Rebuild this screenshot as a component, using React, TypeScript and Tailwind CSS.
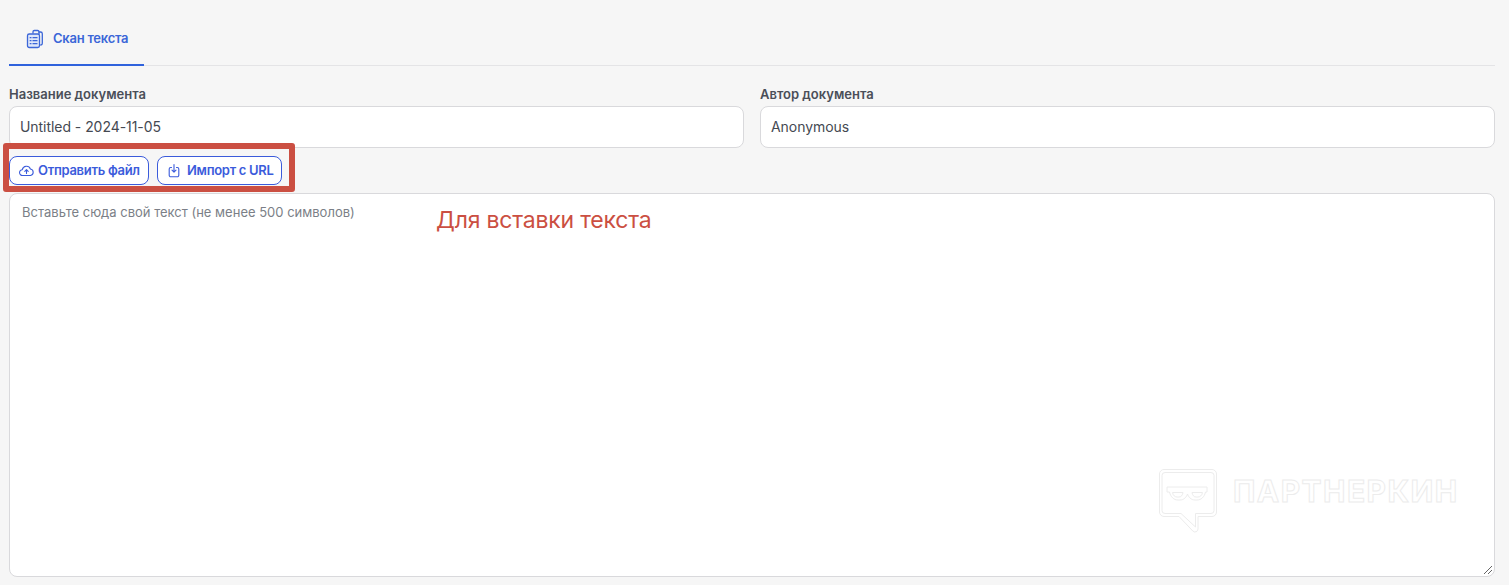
import React from "react";

const font = "font-['Inter','Noto_Sans',sans-serif]";

function ClipIcon() {
  return (
    <svg width="18" height="20" viewBox="0 0 18 20" fill="none" stroke="#3b66d8" strokeWidth="1.3" strokeLinejoin="round" strokeLinecap="round">
      <path d="M13 3h1.500A1.800 1.800 0 0 1 16.300 4.800v9.400A1.800 1.800 0 0 1 14.800 16" />
      <path d="M7 4V2.800A1.300 1.300 0 0 1 8.300 1.500h3.400A1.300 1.300 0 0 1 13 2.800V5" />
      <rect x="1.500" y="5" width="12" height="13.500" rx="1.800" fill="#dfe7fa" />
      <path d="M4.200 8.700h.8M7 8.700h4M4.200 11.700h.8M7 11.700h4M4.200 14.700h.8M7 14.700h4" />
    </svg>
  );
}

function UploadIcon() {
  return (
    <svg width="15" height="14" viewBox="0 0 15 14" fill="none" stroke="#3b5bdb" strokeWidth="1.1" strokeLinecap="round" strokeLinejoin="round">
      <path d="M4 11.500H3.600A2.900 2.900 0 0 1 3.300 5.700 4.200 4.200 0 0 1 11.400 5a3.300 3.300 0 0 1 .1 6.500H4Z" />
      <path d="M7.500 9.500V5.800M5.800 7.300l1.700-1.700 1.700 1.700" />
    </svg>
  );
}

function ImportIcon() {
  return (
    <svg width="12" height="15" viewBox="0 0 12 15" fill="none" stroke="#3b5bdb" strokeWidth="1.1" strokeLinecap="round" strokeLinejoin="round">
      <path d="M3.500 4.500H2.700A1.500 1.500 0 0 0 1.200 6v6.300a1.500 1.500 0 0 0 1.500 1.500h6.600a1.500 1.500 0 0 0 1.500-1.500V6a1.500 1.500 0 0 0-1.500-1.500H8.500" />
      <path d="M6 1.500v7.500M4 7.200l2 2 2-2" />
    </svg>
  );
}

function LogoIcon() {
  return (
    <svg width="60" height="66" viewBox="0 0 60 66" fill="none" stroke="#ececec" strokeWidth="1" strokeLinejoin="round">
      <path d="M5 .5h48A4.500 4.500 0 0 1 57.500 5v38a4.500 4.500 0 0 1-4.500 4.500H39V60a3 3 0 0 1-5.200 2L20 47.500H5A4.500 4.500 0 0 1 .5 43V5A4.500 4.500 0 0 1 5 .5Z" />
      <path d="M6 3.500h46A3 3 0 0 1 55 6.500v35a3 3 0 0 1-3 3H36.500V58L22 44.500H6a3 3 0 0 1-3-3v-35a3 3 0 0 1 3-3Z" />
      <path d="M8 18H48V23H46.500C45.500 28 42 31 38 31H36C32 31 29.500 28 28.500 25 27.500 28 25 31 21 31H19C15 31 11.500 28 10.500 23H8Z" />
      <path d="M13.500 23.500H24C23.500 26.500 22 28 20 28H18C16 28 14 26.500 13.500 23.500ZM33 23.500H43.500C43 26.500 41 28 39 28H37C35 28 33.500 26.500 33 23.500Z" />
    </svg>
  );
}

function Field({ label, value }: { label: string; value: string }) {
  return (
    <div className="flex-1 min-w-0">
      <div className="h-[24px] pt-[2px] text-[13px] leading-[20px] font-semibold text-[#4a4e58]">{label}</div>
      <div className="h-[42px] flex items-center px-[10px] pb-[2px] bg-white border border-[#d9d9dc] rounded-[8px] text-[14px] tracking-[-0.05px] text-[#454952]">{value}</div>
    </div>
  );
}

function ActionButton({ icon, children, className }: { icon: React.ReactNode; children: React.ReactNode; className: string }) {
  return (
    <div className={`h-[29px] flex items-center border border-[#3b5bdb] rounded-[8px] bg-white text-[13px] tracking-[-0.3px] font-semibold text-[#3b5bdb] ${className}`}>
      {icon}
      {children}
    </div>
  );
}

export default function App() {
  return (
    <div className={`relative h-[585px] overflow-hidden bg-[#f6f6f6] pl-[9px] pr-[14px] ${font}`}>
      <div className="h-[66px] border-b border-[#e4e4e6]">
        <div className="w-[135px] h-[66px] border-b-2 border-[#2f62dc] flex items-center pl-[17px] gap-[9px] pt-[13px] text-[13px] tracking-[-0.25px] font-semibold text-[#3b66d8]">
          <ClipIcon />
          <span>Скан текста</span>
        </div>
      </div>

      <div className="flex gap-[16px] mt-[16px]">
        <Field label="Название документа" value="Untitled - 2024-11-05" />
        <Field label="Автор документа" value="Anonymous" />
      </div>

      <div className="flex gap-[8px] mt-[8px]">
        <ActionButton icon={<UploadIcon />} className="w-[140px] pl-[9px] gap-[4px]">Отправить файл</ActionButton>
        <ActionButton icon={<ImportIcon />} className="w-[125px] pl-[10px] gap-[7px]">Импорт с URL</ActionButton>
      </div>

      <div className="relative mt-[8px] h-[384px] bg-white border border-[#d9d9dc] rounded-[8px] px-[12px] pt-[9px] text-[13px] leading-[18px] text-[#7b7f87]">
        Вставьте сюда свой текст (не менее 500 символов)
        <div className="absolute left-[1149px] top-[275px] flex items-start gap-[14px]">
          <LogoIcon />
          <span className="mt-[4px] text-[30px] leading-[36px] font-bold tracking-[1.45px] text-transparent [-webkit-text-stroke:1px_#ececec]">ПАРТНЕРКИН</span>
        </div>
        <svg className="absolute right-[1px] bottom-[1px]" width="10" height="10" viewBox="0 0 10 10" stroke="#555" strokeWidth="0.9">
          <path d="M1 9 9 1M5 9l4-4" />
        </svg>
      </div>

      <div className="absolute left-[3px] top-[143px] w-[292px] h-[49px] border-[6px] border-[#cb4f42] rounded-[3px]" />
      <div className="absolute left-[436px] top-[206px] text-[23px] leading-[28px] tracking-[-0.2px] text-[#cb4f42]">Для вставки текста</div>
    </div>
  );
}
